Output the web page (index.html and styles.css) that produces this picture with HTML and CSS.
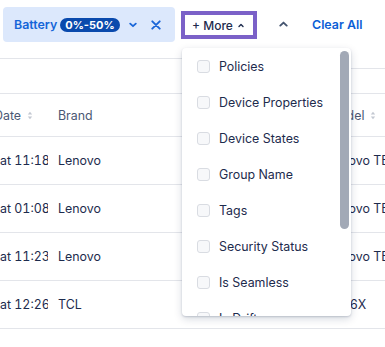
FILE: index.html
```html
<!DOCTYPE html>
<html lang="en">
<head>
<meta charset="utf-8">
<title>Devices</title>
<link rel="stylesheet" href="styles.css">
</head>
<body>
<div class="page">
  <div class="toolbar">
    <div class="chip">
      <span class="chip-label">Battery</span>
      <span class="badge">0%-50%</span>
      <svg class="chev-down" width="8" height="6" viewBox="0 0 8 6"><path d="M1.2 1.6 L4 4.2 L6.8 1.6" fill="none" stroke="currentColor" stroke-width="1.8" stroke-linecap="round" stroke-linejoin="round"/></svg>
      <svg class="close" width="10" height="10" viewBox="0 0 10 10"><path d="M1.3 1.3 L8.7 8.7 M8.7 1.3 L1.3 8.7" fill="none" stroke="currentColor" stroke-width="1.9" stroke-linecap="round"/></svg>
    </div>
    <button class="more">+ More <svg class="chev-up-s" width="6" height="5" viewBox="0 0 6 5"><path d="M1 3.6 L3 1.6 L5 3.6" fill="none" stroke="currentColor" stroke-width="1.4" stroke-linecap="round" stroke-linejoin="round"/></svg></button>
    <svg class="chev-up" width="9" height="6" viewBox="0 0 9 6"><path d="M1.3 4.6 L4.5 1.6 L7.7 4.6" fill="none" stroke="currentColor" stroke-width="1.9" stroke-linecap="round" stroke-linejoin="round"/></svg>
    <a class="clear">Clear All</a>
  </div>

  <div class="subbar">
    <div class="subbar-left"></div>
    <div class="subbar-right"></div>
  </div>

  <div class="table">
    <div class="row head">
      <div class="cell date-head">Date <svg class="sort" width="6" height="9" viewBox="0 0 6 9"><path d="M3 0.8 L5.2 3.4 H0.8 Z M3 8.2 L5.2 5.6 H0.8 Z" fill="currentColor"/></svg></div>
      <div class="cell">Brand</div>
      <div class="cell model-head">Model <svg class="sort" width="6" height="9" viewBox="0 0 6 9"><path d="M3 0.8 L5.2 3.4 H0.8 Z M3 8.2 L5.2 5.6 H0.8 Z" fill="currentColor"/></svg></div>
    </div>
    <div class="row">
      <div class="cell when">at 11:18 am</div>
      <div class="cell">Lenovo</div>
      <div class="cell">Lenovo TB-X606F</div>
    </div>
    <div class="row">
      <div class="cell when">at 01:08 pm</div>
      <div class="cell">Lenovo</div>
      <div class="cell">Lenovo TB-X505F</div>
    </div>
    <div class="row">
      <div class="cell when">at 11:23 am</div>
      <div class="cell">Lenovo</div>
      <div class="cell">Lenovo TB-8505F</div>
    </div>
    <div class="row">
      <div class="cell when">at 12:26 pm</div>
      <div class="cell">TCL</div>
      <div class="cell model-tcl">9026X</div>
    </div>
  </div>

  <div class="menu">
    <ul class="menu-list">
      <li class="opt"><span class="box"></span>Policies</li>
      <li class="opt"><span class="box"></span>Device Properties</li>
      <li class="opt"><span class="box"></span>Device States</li>
      <li class="opt"><span class="box"></span>Group Name</li>
      <li class="opt"><span class="box"></span>Tags</li>
      <li class="opt"><span class="box"></span>Security Status</li>
      <li class="opt"><span class="box"></span>Is Seamless</li>
      <li class="opt"><span class="box"></span>Is Drift</li>
      <li class="opt"><span class="box"></span>Battery</li>
      <li class="opt"><span class="box"></span>Last Seen</li>
      <li class="opt"><span class="box"></span>OS Version</li>
    </ul>
    <div class="thumb"></div>
  </div>
</div>
</body>
</html>
```

FILE: styles.css
```css
* { box-sizing: border-box; }
html, body { margin: 0; padding: 0; background: #ffffff; }
body {
  font-family: Inter, "Noto Sans", "Liberation Sans", sans-serif;
  font-size: 13px;
  color: #1d2b4d;
  overflow: hidden;
}
.page { position: relative; width: 385px; height: 347px; overflow: hidden; }

.toolbar {
  height: 58px;
  display: flex;
  align-items: flex-start;
}
.chip {
  margin: 7px 0 0 3px;
  width: 172px;
  height: 35px;
  background: #dce8fc;
  border-radius: 4px;
  display: flex;
  align-items: center;
  padding-left: 11px;
  color: #1565d8;
}
.chip-label { font-weight: 600; font-size: 12.4px; }
.badge {
  margin-left: 3px;
  background: #0a4aad;
  color: #ffffff;
  font-weight: 700;
  font-size: 11px;
  height: 14px;
  line-height: 14px;
  padding: 0 5px;
  border-radius: 7px;
}
.chev-down { margin-left: 9px; color: #1a66d8; }
.close { margin-left: 14px; color: #1a66d8; }

.more {
  margin: 11px 0 0 6px;
  height: 28px;
  width: 76px;
  border: 4px solid #7b61c8;
  background: #ffffff;
  font: inherit;
  font-size: 12px;
  font-weight: 500;
  color: #1d2b4d;
  padding: 0 0 0 7px;
  display: flex;
  align-items: center;
  gap: 5px;
}
.chev-up-s { color: #1d2b4d; }
.chev-up { margin: 21px 0 0 22px; color: #44546f; }
.clear {
  margin: 16px 0 0 24px;
  font-weight: 600;
  color: #0c5fd6;
  font-size: 12.4px;
  line-height: 18px;
}

.subbar { display: flex; height: 35px; }
.subbar-left { width: 182px; border-top: 1px solid #e3e5ea; }
.subbar-right { flex: 1; margin-top: 10px; border-top: 1px solid #e3e5ea; }

.table { border-top: 1px solid #e3e5ea; }
.row {
  display: grid;
  grid-template-columns: 48px 259px 1fr;
  column-gap: 10px;
  height: 48px;
  align-items: center;
  border-bottom: 1px solid #e3e5ea;
  color: #1d2b4d;
  font-size: 12.4px;
}
.row.head { height: 43px; color: #4a5874; }
.cell { white-space: nowrap; overflow: hidden; text-overflow: clip; }
.when { font-variant-numeric: tabular-nums; }
.head .cell { display: flex; align-items: center; gap: 6px; }
.head .date-head { margin-left: -6px; }
.head .model-head { margin-left: 1px; }
.sort { color: #c3c8d1; flex: none; }

.menu {
  position: absolute;
  left: 182px;
  top: 48px;
  width: 169px;
  height: 268px;
  background: #ffffff;
  border-radius: 4px;
  box-shadow: 0 1px 2px rgba(9, 30, 66, 0.18), 0 3px 8px rgba(9, 30, 66, 0.16);
  overflow: hidden;
}
.menu-list {
  list-style: none;
  margin: 0;
  padding: 0;
  height: 268px;
  overflow: hidden;
}
.thumb {
  position: absolute;
  right: 2px;
  top: 3px;
  width: 9px;
  height: 178px;
  border-radius: 5px;
  background: #a2a9b6;
}
.opt {
  height: 36px;
  display: flex;
  align-items: center;
  padding-left: 15px;
  color: #1d2b4d;
  font-size: 12.4px;
}
.box {
  width: 13px;
  height: 13px;
  border: 1px solid #d9dce2;
  background: #f7f8fa;
  border-radius: 3px;
  margin-right: 9px;
  flex: none;
}
```
